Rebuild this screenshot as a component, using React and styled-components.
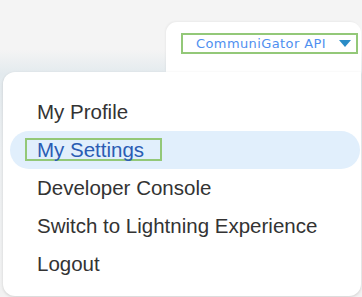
import React from 'react';
import styled, { createGlobalStyle } from 'styled-components';

const GlobalStyle = createGlobalStyle`
  html, body {
    margin: 0;
    padding: 0;
  }
  body {
    font-family: "Liberation Sans", Arial, sans-serif;
  }
`;

const Page = styled.div`
  width: 362px;
  height: 297px;
  overflow: hidden;
  display: flex;
  flex-direction: column;
  background: linear-gradient(
    to bottom,
    #f4f4f4 0px,
    #f4f4f4 50px,
    #e3eaee 74px,
    #edf0f2 150px,
    #f2f2f2 297px
  );
`;

const Header = styled.div`
  display: flex;
  justify-content: flex-end;
  padding-top: 22px;
  padding-right: 1px;
`;

const Tab = styled.div`
  width: 195px;
  height: 50px;
  box-sizing: border-box;
  background: #ffffff;
  border-radius: 11px 11px 0 0;
  padding: 11px 3px 0 15px;
  box-shadow: -1px -1px 2px rgba(0, 0, 0, 0.04);
`;

const OrgButton = styled.div`
  display: flex;
  align-items: center;
  justify-content: space-between;
  height: 21px;
  box-sizing: border-box;
  border: 2px solid #93c878;
  padding: 0 5px 0 13px;
  font-family: "DejaVu Sans", Verdana, sans-serif;
  font-size: 13px;
  color: #4f8ff0;
  letter-spacing: 0.4px;
`;

const Caret = styled.span`
  width: 0;
  height: 0;
  border-left: 6px solid transparent;
  border-right: 6px solid transparent;
  border-top: 7px solid #2a8cc6;
`;

const Panel = styled.div`
  flex: 1;
  margin: 0 1px 1px 3px;
  background: #ffffff;
  border-radius: 12px 0 12px 12px;
  box-shadow: 0 1px 3px rgba(0, 0, 0, 0.14);
  padding: 21px 1px 13px 7px;
  display: flex;
  flex-direction: column;
`;

const Item = styled.div`
  height: 38px;
  line-height: 38px;
  padding-left: 27px;
  font-size: 20.5px;
  color: ${(p) => (p.active ? '#2a5cb3' : '#333333')};
  background: ${(p) => (p.active ? '#e1effc' : 'transparent')};
  border-radius: 19px;
  white-space: nowrap;
`;

const Focus = styled.span`
  display: inline-block;
  line-height: 19px;
  margin-left: -12px;
  padding: 0 16px 0 10px;
  border: 2px solid #93c878;
`;

const items = [
  'My Profile',
  'My Settings',
  'Developer Console',
  'Switch to Lightning Experience',
  'Logout',
];

const App = () => {
  return (
    <Page>
      <GlobalStyle />
      <Header>
        <Tab>
          <OrgButton>
            <span>CommuniGator API</span>
            <Caret />
          </OrgButton>
        </Tab>
      </Header>
      <Panel>
        {items.map((label) => (
          <Item key={label} active={label === 'My Settings'}>
            {label === 'My Settings' ? <Focus>{label}</Focus> : label}
          </Item>
        ))}
      </Panel>
    </Page>
  );
};

export default App;
